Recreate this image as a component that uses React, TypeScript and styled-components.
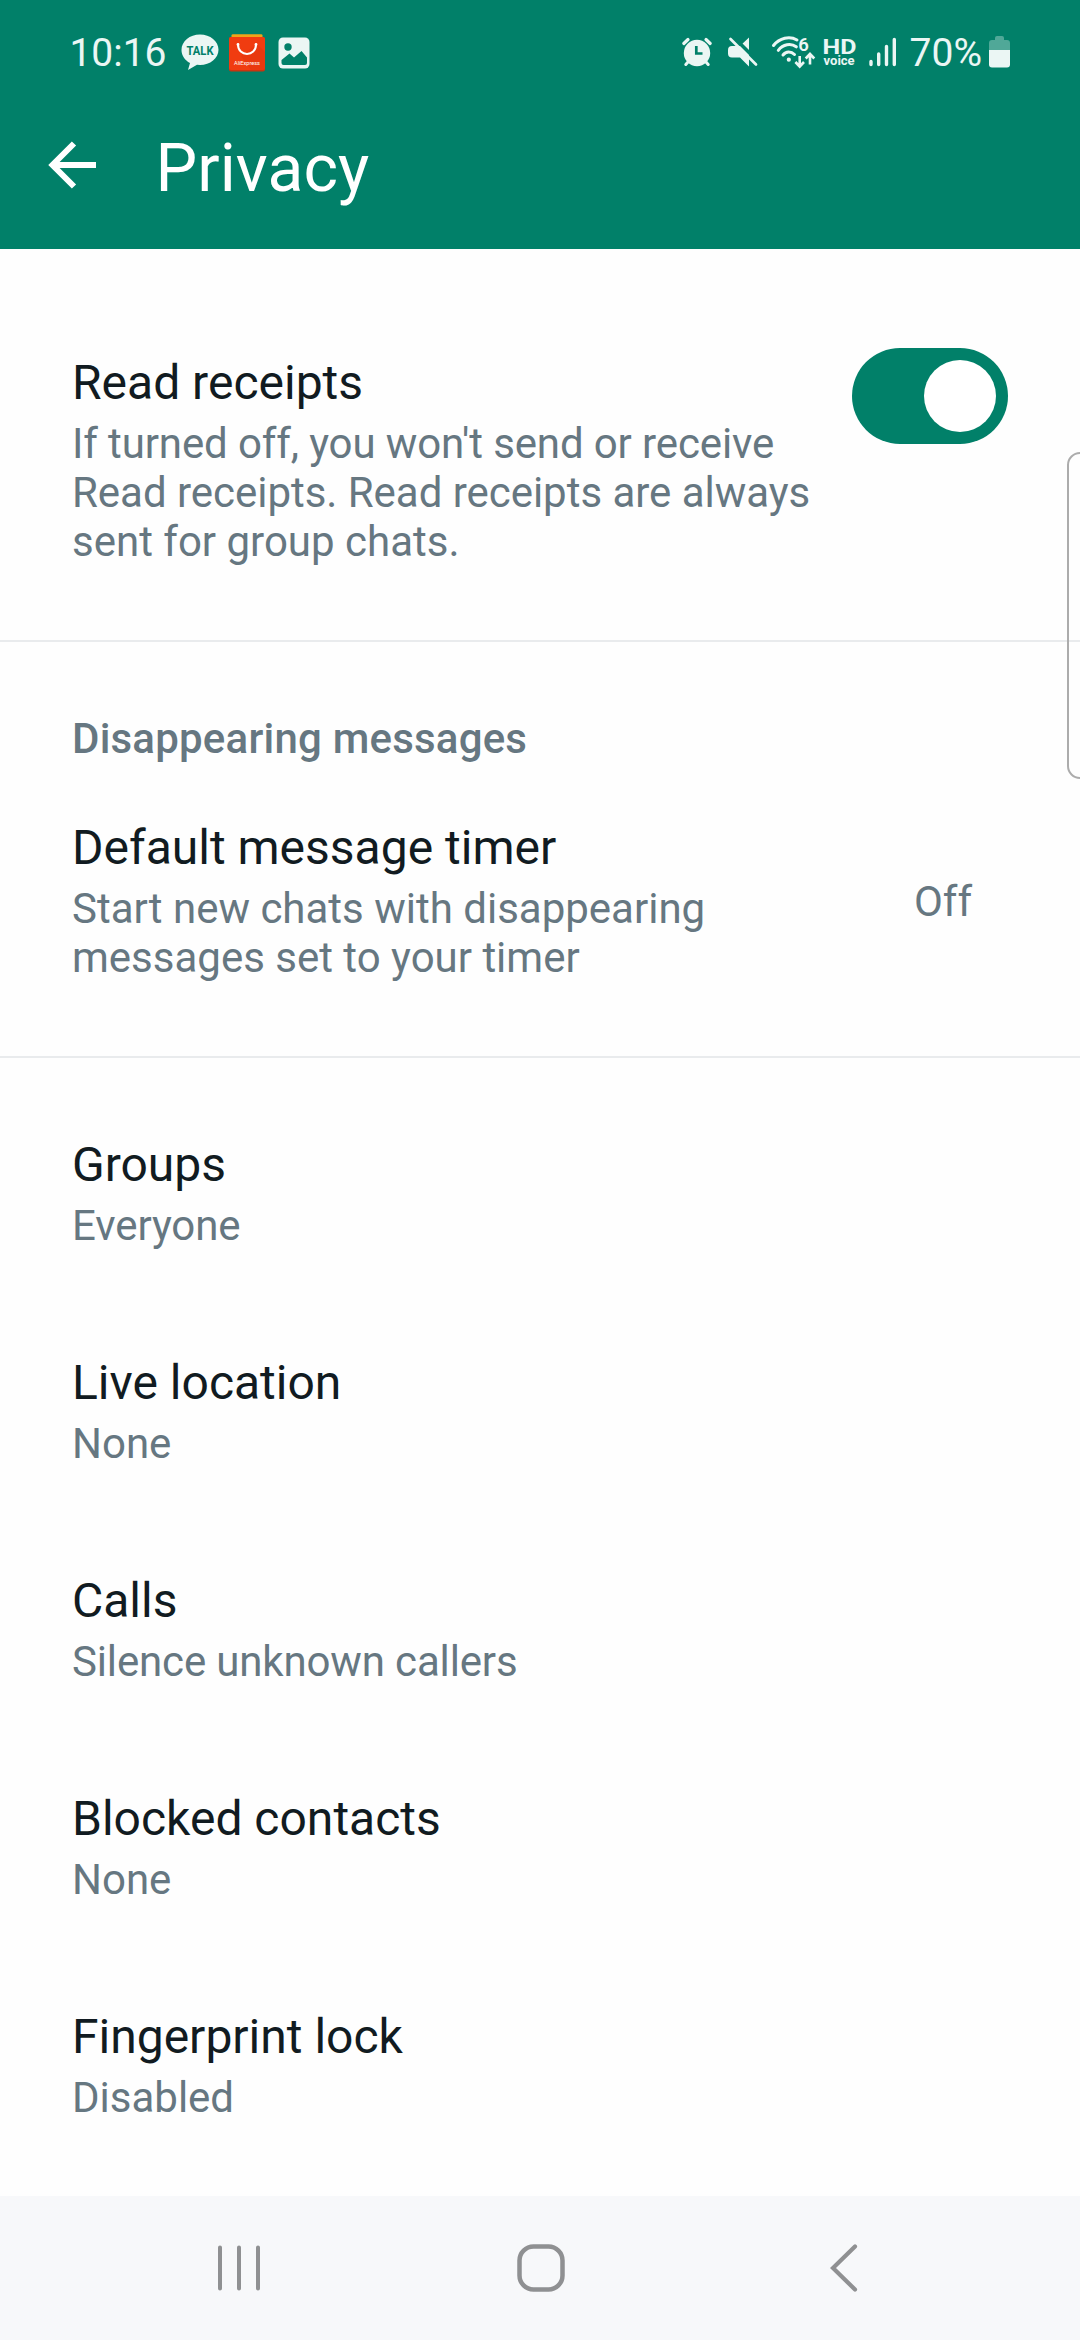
import React from "react";
import styled, { createGlobalStyle } from "styled-components";

const GlobalStyle = createGlobalStyle`
  * { box-sizing: border-box; }
  html, body { margin: 0; padding: 0; background: #fefefe; }
  body { font-family: Roboto, "Liberation Sans", sans-serif; }
`;

const Screen = styled.div`
  position: relative;
  display: flex;
  flex-direction: column;
  width: 1080px;
  height: 2340px;
  overflow: hidden;
  background: #fefefe;
`;

const Header = styled.header`
  display: flex;
  flex-direction: column;
  height: 249px;
  background: #018069;
  color: #fff;
`;

const StatusBar = styled.div`
  display: flex;
  justify-content: space-between;
  align-items: flex-start;
  height: 103px;
  padding: 30px 70px 0 69.4px;
  color: #ebf6f4;
`;

const StatusGroup = styled.div`
  display: flex;
  align-items: center;
  height: 46px;
`;

const StatusText = styled.span<{ $gap?: number }>`
  margin-left: ${(p) => p.$gap ?? 0}px;
  font-size: 39px;
  line-height: 46px;
  white-space: nowrap;
`;

const StatusIcon = styled.svg<{ $gap: number; $lift?: number }>`
  display: block;
  flex: none;
  margin-left: ${(p) => p.$gap}px;
  margin-bottom: ${(p) => (p.$lift ?? 0) * 2}px;
  overflow: visible;
`;

const HdVoice = styled.div`
  display: flex;
  flex-direction: column;
  align-items: center;
  width: 33px;
  margin: 0 0 1px 7.500px;
  font-weight: 700;
`;

const HdTop = styled.span`
  font-size: 20px;
  line-height: 16px;
  transform: scaleX(1.25);
`;

const HdBottom = styled.span`
  font-size: 13px;
  line-height: 12px;
`;

const TitleBar = styled.div`
  display: flex;
  align-items: center;
  height: 124px;
  padding-left: 48px;
`;

const Title = styled.h1`
  margin: 8px 0 0 58.500px;
  font-size: 66px;
  font-weight: 400;
  line-height: 78px;
  letter-spacing: 0.1px;
`;

const Content = styled.main`
  display: flex;
  flex: 1;
  flex-direction: column;
`;

const Section = styled.section<{ $top: number; $bottom?: number; $line?: boolean }>`
  display: flex;
  flex-direction: column;
  padding: ${(p) => p.$top}px 72px ${(p) => p.$bottom ?? 0}px;
  border-bottom: ${(p) => (p.$line ? "2px solid #e9ebed" : "none")};
`;

const Row = styled.div`
  display: flex;
  justify-content: space-between;
`;

const Entry = styled.div<{ $width?: number }>`
  display: flex;
  flex-direction: column;
  gap: 8px;
  width: ${(p) => (p.$width ? `${p.$width}px` : "auto")};
`;

const Label = styled.span`
  color: #111b21;
  font-size: 48px;
  line-height: 56px;
`;

const Detail = styled.span<{ $tracking?: number }>`
  color: #667781;
  font-size: 42px;
  line-height: 49px;
  letter-spacing: ${(p) => p.$tracking ?? 0}px;
`;

const SectionHeading = styled.h2`
  margin: 0 0 57px;
  color: #667781;
  font-size: 42px;
  font-weight: 500;
  line-height: 49px;
  letter-spacing: 0.21px;
`;

const Value = styled(Detail)`
  align-self: center;
  margin-right: 36px;
`;

const Options = styled(Section)`
  gap: 105px;
`;

const Switch = styled.button`
  display: flex;
  justify-content: flex-end;
  align-items: center;
  width: 156px;
  height: 96px;
  margin-top: -7px;
  padding: 0 12px;
  border: 0;
  border-radius: 48px;
  background: #018069;
`;

const Thumb = styled.span`
  width: 72px;
  height: 72px;
  border-radius: 50%;
  background: #fff;
`;

const EdgeHandle = styled.div`
  position: absolute;
  top: 452px;
  right: -20px;
  width: 33px;
  height: 327px;
  border: 2px solid #acacac;
  border-radius: 13px;
`;

const NavBar = styled.nav`
  display: grid;
  grid-template-columns: 240px 363px 244px;
  align-items: center;
  justify-items: center;
  height: 144px;
  padding-left: 119px;
  background: #f7f8fa;
`;

const options = [
  { label: "Groups", detail: "Everyone", tracking: -0.1 },
  { label: "Live location", detail: "None" },
  { label: "Calls", detail: "Silence unknown callers", tracking: -0.15 },
  { label: "Blocked contacts", detail: "None" },
  { label: "Fingerprint lock", detail: "Disabled" },
];

const green = "#018069";

const TalkIcon = () => (
  <StatusIcon $gap={14} $lift={0.5} width="38" height="37" viewBox="0 0 38 37" fill="currentColor">
    <path d="M19 .5C8.800.5.5 7.300.5 16c0 5.600 3.400 10.300 8.500 13L7 36l9-5.200 3 .2c10.200 0 18.500-6.700 18.500-15.200S29.200.5 19 .5Z" />
    <text x="19" y="20.500" textAnchor="middle" fontSize="12.300" fontWeight="700" fill={green} textLength="27" lengthAdjust="spacingAndGlyphs">TALK</text>
  </StatusIcon>
);

const ShopIcon = () => (
  <StatusIcon $gap={10} $lift={0.5} width="36" height="38" viewBox="0 0 36 38">
    <path d="M2.500 4V1.500Q2.500.3 4 .3h28q1.500 0 1.500 1.200V4Z" fill="#f0a318" />
    <rect y="3" width="36" height="34.500" rx="2" fill="#c93410" />
    <rect y="3" width="36" height="33" rx="2" fill="#f03c10" />
    <path d="m28 10 8 8v18H22L12 22Z" fill="#e0340e" opacity=".45" />
    <path d="M9 10.500c0 12.500 18 12.500 18 0" fill="none" stroke="#fff" strokeWidth="2" strokeLinecap="round" />
    <circle cx="9" cy="10.500" r="1.400" fill="#fff" />
    <circle cx="27" cy="10.500" r="1.400" fill="#fff" />
    <text x="18" y="30.500" textAnchor="middle" fontSize="6" fill="#fff" textLength="26" lengthAdjust="spacingAndGlyphs">AliExpress</text>
  </StatusIcon>
);

const GalleryIcon = () => (
  <StatusIcon $gap={13} $lift={0.5} width="32" height="32" viewBox="0 0 32 32">
    <rect x=".5" y=".5" width="31" height="31" rx="4.500" fill="currentColor" />
    <circle cx="10" cy="10" r="3.700" fill={green} />
    <path d="m3.500 23 8-6.500 4.500 4 7.500-6.500 5.500 6.500V26q0 2-2 2h-21.500q-2 0-2-2Z" fill={green} />
  </StatusIcon>
);

const AlarmIcon = () => (
  <StatusIcon $gap={0} $lift={0.5} width="30" height="29" viewBox="0 0 30 29" fill="none" stroke="currentColor" strokeLinecap="round">
    <circle cx="15" cy="15" r="13.200" fill="currentColor" stroke="none" />
    <path d="m1.800 5.500 4.200-4M28.200 5.500 24 1.500" strokeWidth="3.200" />
    <path d="m6 24-2.200 2.500M24 24l2.200 2.500" strokeWidth="3" />
    <path d="M14.300 8v7.500h6.200" stroke={green} strokeWidth="2.700" strokeLinecap="butt" />
  </StatusIcon>
);

const MutedIcon = () => (
  <StatusIcon $gap={15.6} $lift={0.7} width="30" height="30" viewBox="0 0 30 30">
    <path d="M21 .5v29L12 20.500H4q-4 0-4-4v-3.500q0-4 4-4h8Z" fill="currentColor" />
    <path d="m4.500-1 26 26" stroke={green} strokeWidth="3.500" />
    <path d="m2.500 2 25.500 25.500" stroke="currentColor" strokeWidth="2.700" strokeLinecap="round" />
  </StatusIcon>
);

const WifiIcon = () => (
  <StatusIcon $gap={14.2} $lift={1} width="43" height="32" viewBox="0 0 43 32" fill="none" stroke="currentColor" strokeLinecap="round">
    <path d="M1.500 9.500C7.500 2 17.500-.5 25 4" strokeWidth="3" />
    <path d="M6.300 14.300c4.700-6 12.500-7.500 18-3.500" strokeWidth="3" />
    <path d="M11 19c3-4 8-4 11.500-.5" strokeWidth="3" />
    <circle cx="16.800" cy="23.700" r="2.100" fill="currentColor" stroke="none" />
    <text x="26.300" y="14.500" fontSize="18.500" fontWeight="600" fill="currentColor" stroke="none">6</text>
    <path d="M27.700 20v10.500m-4.300-4.500 4.300 4.500 4.300-4.500M38 28.500V18m-4.300 4.500L38 18l4.300 4.500" strokeWidth="2.600" strokeLinecap="butt" />
  </StatusIcon>
);

const SignalIcon = () => (
  <StatusIcon $gap={13} $lift={1.4} width="28" height="30" viewBox="0 0 28 30" stroke="currentColor" strokeWidth="3.400" strokeLinecap="round">
    <path d="M2 24.500v3M9.700 17v10.500M17.500 9.500v18M25.300 2.500v25" />
  </StatusIcon>
);

const BatteryIcon = () => (
  <StatusIcon $gap={7} $lift={1} width="21" height="32" viewBox="0 0 21 32" fill="currentColor">
    <path d="M0 14V7q0-3 3-3h3V2q0-2 2-2h5q2 0 2 2v2h3q3 0 3 3v7Z" opacity=".34" />
    <path d="M0 14h21v14.500q0 3-3 3H3q-3 0-3-3Z" />
  </StatusIcon>
);

export default function App() {
  return (
    <>
      <GlobalStyle />
      <Screen>
        <Header>
          <StatusBar>
            <StatusGroup>
              <StatusText>10:16</StatusText>
              <TalkIcon />
              <ShopIcon />
              <GalleryIcon />
            </StatusGroup>
            <StatusGroup>
              <AlarmIcon />
              <MutedIcon />
              <WifiIcon />
              <HdVoice>
                <HdTop>HD</HdTop>
                <HdBottom>voice</HdBottom>
              </HdVoice>
              <SignalIcon />
              <StatusText $gap={13}>70%</StatusText>
              <BatteryIcon />
            </StatusGroup>
          </StatusBar>
          <TitleBar>
            <svg width="49" height="48" viewBox="0 0 49 48" fill="none" stroke="#fff" strokeWidth="6">
              <path d="M48 24H5M26 2.500 4.500 24 26 45.500" />
            </svg>
            <Title>Privacy</Title>
          </TitleBar>
        </Header>
        <Content>
          <Section $top={106} $bottom={74} $line>
            <Row>
              <Entry $width={750}>
                <Label>Read receipts</Label>
                <Detail>
                  <Detail $tracking={-0.12}>If turned off, you won't send or receive</Detail>{" "}
                  <Detail $tracking={-0.03}>Read receipts. Read receipts are always</Detail>{" "}
                  sent for group chats.
                </Detail>
              </Entry>
              <Switch role="switch" aria-checked="true" aria-label="Read receipts">
                <Thumb />
              </Switch>
            </Row>
          </Section>
          <Section $top={72} $bottom={74} $line>
            <SectionHeading>Disappearing messages</SectionHeading>
            <Row>
              <Entry $width={700}>
                <Label>Default message timer</Label>
                <Detail>Start new chats with disappearing messages set to your timer</Detail>
              </Entry>
              <Value>Off</Value>
            </Row>
          </Section>
          <Options $top={79}>
            {options.map((o) => (
              <Entry key={o.label}>
                <Label>{o.label}</Label>
                <Detail $tracking={o.tracking}>{o.detail}</Detail>
              </Entry>
            ))}
          </Options>
        </Content>
        <NavBar>
          <svg width="44" height="46" viewBox="0 0 44 46" stroke="#8f9092" strokeWidth="4" strokeLinecap="round">
            <path d="M3 2.500v41M22 2.500v41M41 2.500v41" />
          </svg>
          <svg width="48" height="48" viewBox="0 0 48 48" fill="none" stroke="#8f9092" strokeWidth="4.500">
            <rect x="2.500" y="2.500" width="43" height="43" rx="14" />
          </svg>
          <svg width="28" height="48" viewBox="0 0 28 48" fill="none" stroke="#8f9092" strokeWidth="4.200" strokeLinecap="round">
            <path d="M25 2.500 3 24l22 21.500" />
          </svg>
        </NavBar>
        <EdgeHandle />
      </Screen>
    </>
  );
}
